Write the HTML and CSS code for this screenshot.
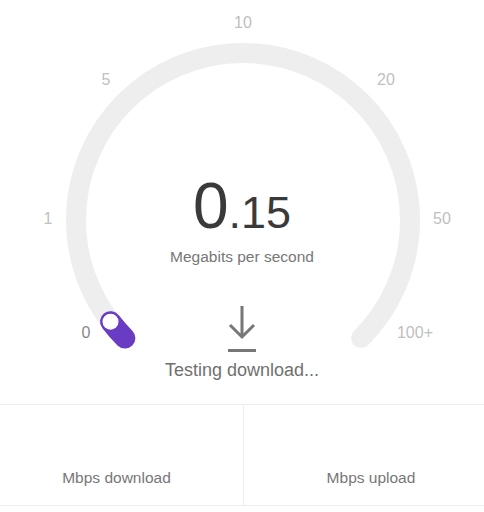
FILE: index.html
```html
<!DOCTYPE html>
<html lang="en">
<head>
    <meta charset="UTF-8">
    <meta name="viewport" content="width=device-width, initial-scale=1.0">
    <title>Speed Test</title>
    <link rel="stylesheet" href="styles.css">
</head>
<body>
    <div class="speedtest">
        <!-- Gauge -->
        <div class="gauge">
            <svg class="dial" width="484" height="404" viewBox="0 0 484 404">
                <path class="track" d="M124.9 338.1 A167 167 0 1 1 361.1 338.1"/>
                <path class="progress" d="M124.9 338.1 A167 167 0 0 1 110.5 321.7"/>
                <circle class="knob" cx="110.5" cy="321.7" r="8"/>
                <text class="tick" x="243" y="22">10</text>
                <text class="tick" x="106" y="79">5</text>
                <text class="tick" x="386" y="79">20</text>
                <text class="tick" x="48" y="218">1</text>
                <text class="tick" x="442" y="218">50</text>
                <text class="tick active" x="86" y="332">0</text>
                <text class="tick" x="415" y="332">100+</text>
            </svg>

            <div class="readout">
                <div class="speed"><span class="whole">0</span><span class="fraction">.15</span></div>
                <div class="unit">Megabits per second</div>
                <svg class="phase-icon" width="32" height="50" viewBox="0 0 32 50">
                    <path d="M16 2 V33 M4 21 L16 33 L28 21 M2 46.5 H30"/>
                </svg>
                <div class="status">Testing download...</div>
            </div>
        </div>

        <!-- Results -->
        <div class="results">
            <div class="result download">Mbps download</div>
            <div class="result upload">Mbps upload</div>
        </div>
    </div>
</body>
</html>
```

FILE: styles.css
```css
body {
    margin: 0;
    font-family: "Liberation Sans", Arial, sans-serif;
    background-color: #fff;
}
.speedtest {
    width: 484px;
}
.gauge {
    position: relative;
    height: 404px;
}
.dial {
    position: absolute;
    top: 0;
    left: 0;
}
.track {
    fill: none;
    stroke: #eeeeee;
    stroke-width: 20;
    stroke-linecap: round;
}
.progress {
    fill: none;
    stroke: #6a3cc4;
    stroke-width: 21;
    stroke-linecap: round;
}
.knob {
    fill: #fff;
}
.tick {
    font-size: 16px;
    fill: #c0c0c0;
    text-anchor: middle;
    dominant-baseline: central;
}
.tick.active {
    fill: #888;
}
.readout {
    position: relative;
    display: flex;
    flex-direction: column;
    align-items: center;
    padding-top: 174px;
}
.speed {
    color: #3a3a3a;
    line-height: 1;
    height: 60px;
}
.whole {
    font-size: 64px;
}
.fraction {
    font-size: 45px;
}
.unit {
    margin-top: 14px;
    font-size: 15.5px;
    color: #777;
}
.phase-icon {
    margin-top: 38px;
    fill: none;
    stroke: #777;
    stroke-width: 3;
}
.status {
    margin-top: 6px;
    font-size: 18px;
    color: #707070;
}
.results {
    display: grid;
    grid-template-columns: 243px 1fr;
    height: 100px;
    border-top: 1px solid #eee;
    border-bottom: 1px solid #eee;
}
.result {
    display: flex;
    align-items: flex-end;
    justify-content: center;
    padding-bottom: 18px;
    font-size: 15.5px;
    color: #777;
}
.result.download {
    padding-right: 10px;
}
.result.upload {
    padding-left: 14px;
    border-left: 1px solid #eee;
}
```
